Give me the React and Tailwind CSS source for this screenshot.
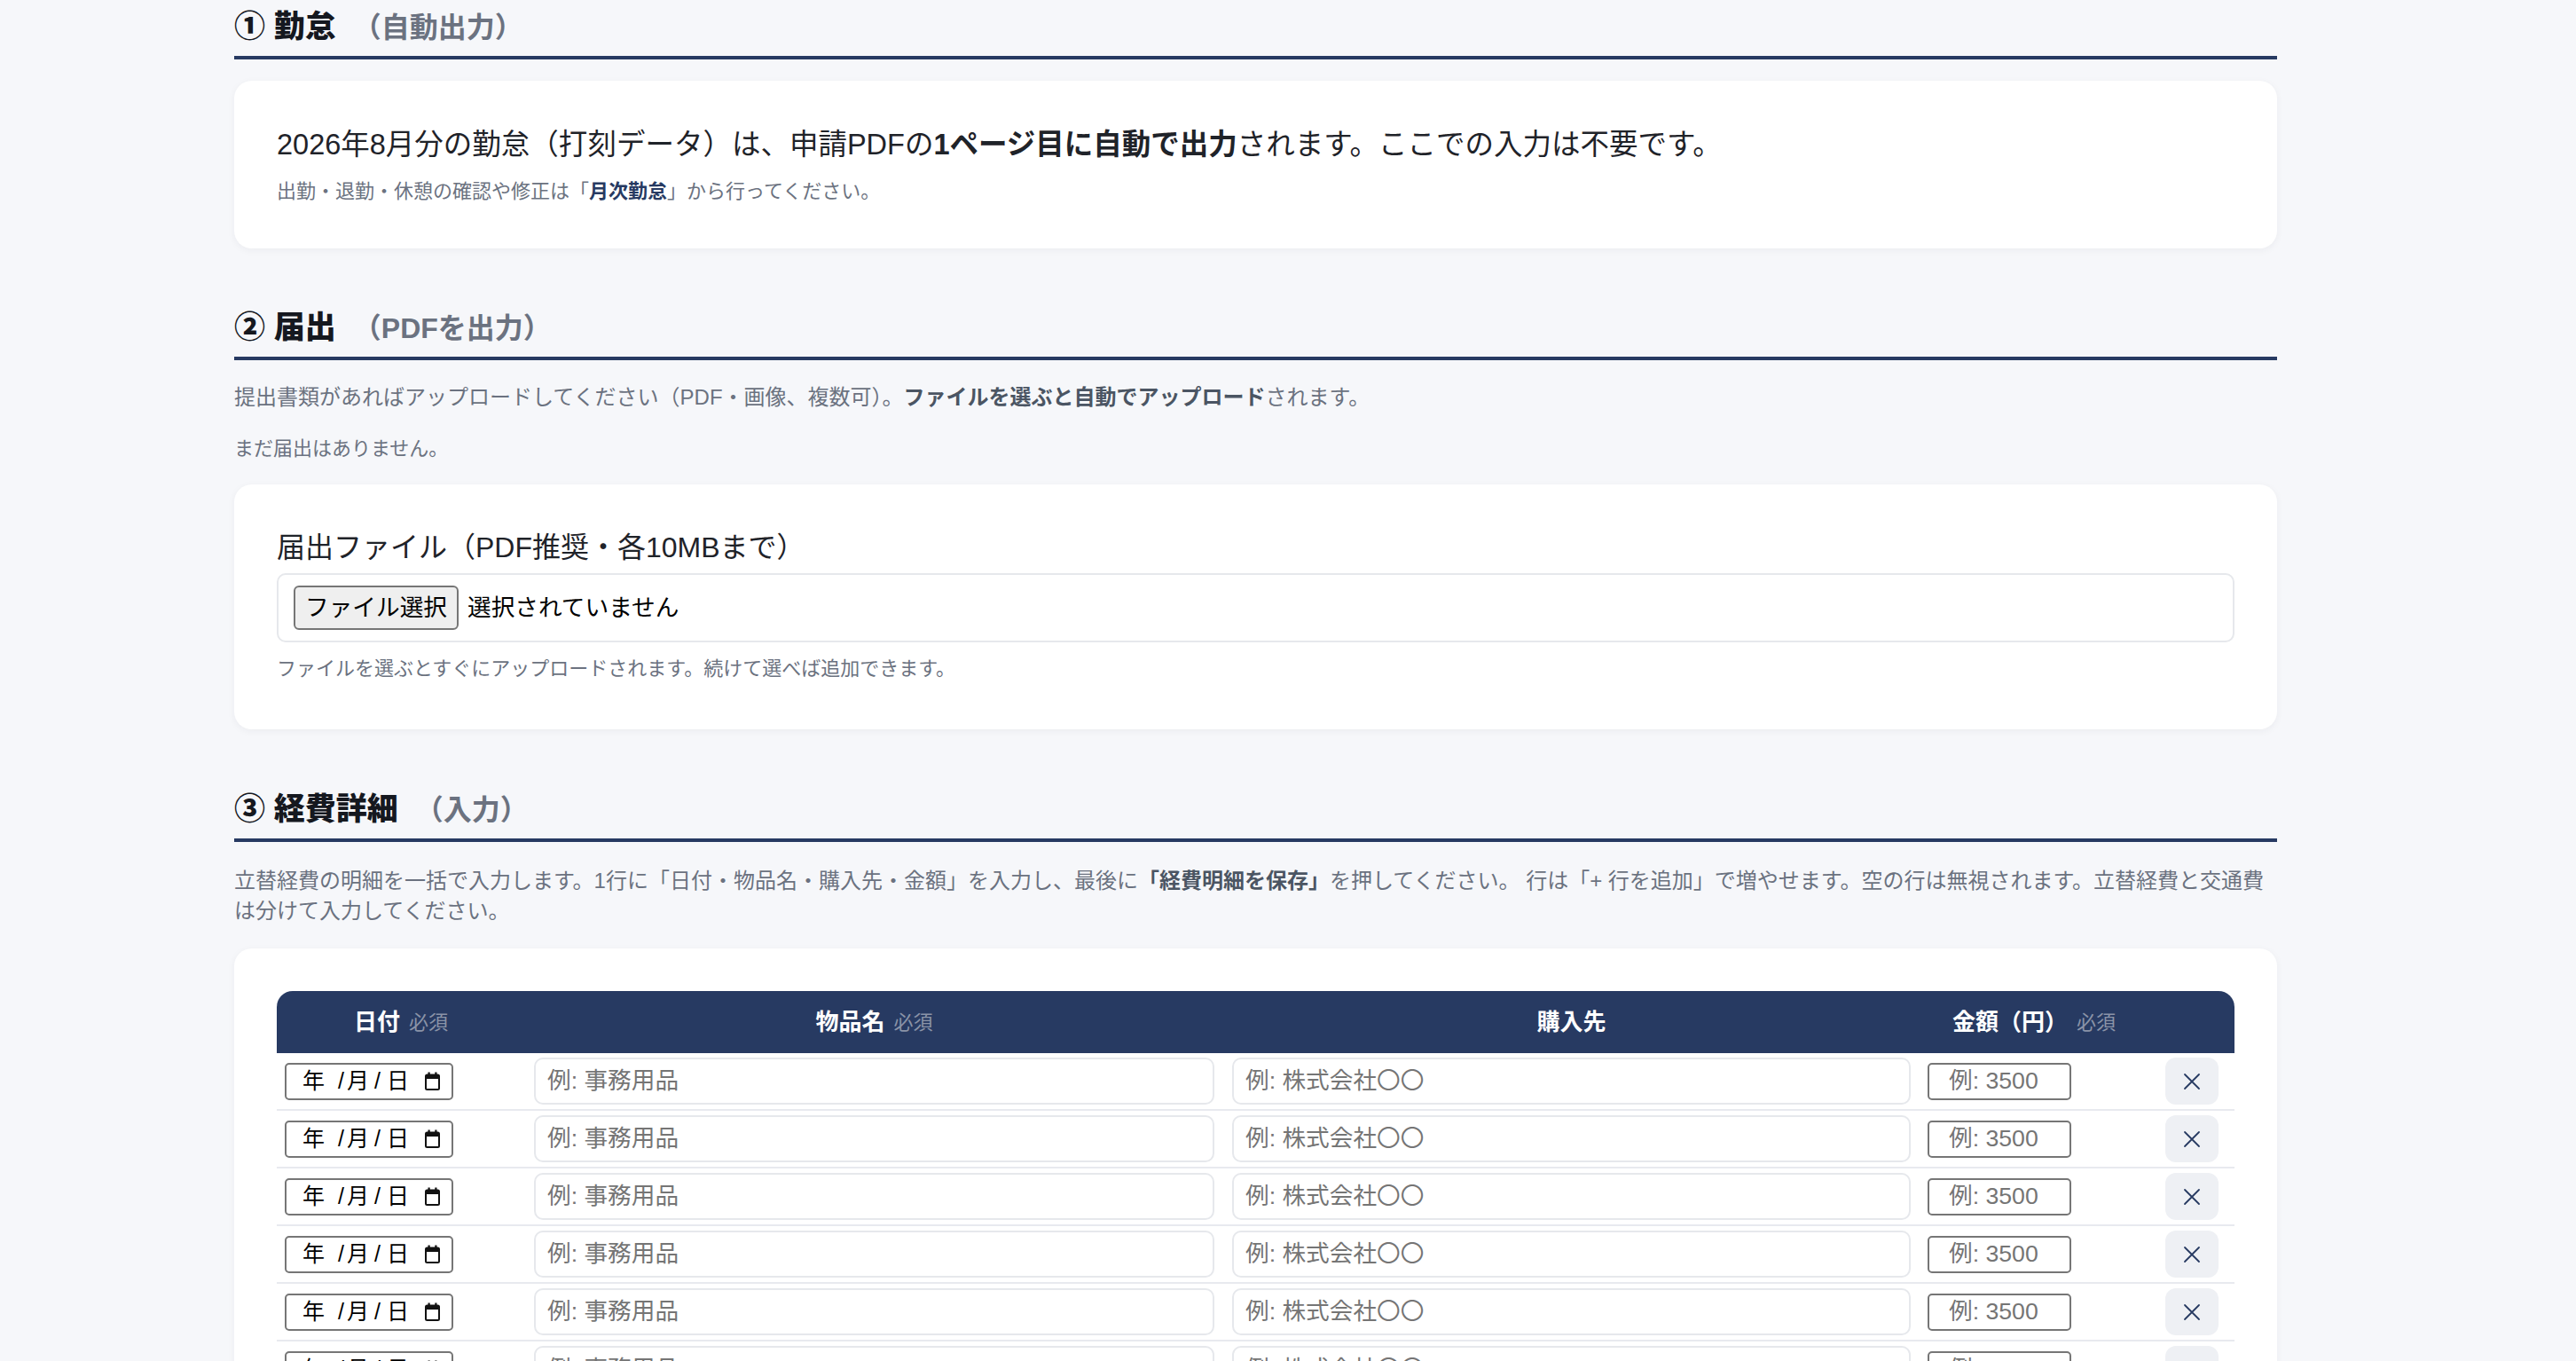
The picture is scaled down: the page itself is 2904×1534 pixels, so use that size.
import { Fragment } from 'react';

const NAVY = '#273a62';

function SectionHeading({ num, title, note }) {
  return (
    <h2 className="flex items-baseline text-[35px] leading-[52px] font-extrabold text-[#15181f] pb-[6px] border-b-4 border-[#273a62]">
      <span>{num} {title}</span>
      <span className="ml-[19px] text-[32px] font-bold text-[#6b7280]">（{note}）</span>
    </h2>
  );
}

function Card({ className = '', children }) {
  return (
    <div className={`bg-white rounded-[20px] shadow-[0_2px_8px_rgba(30,41,59,0.05)] ${className}`}>
      {children}
    </div>
  );
}

function CalendarIcon() {
  return (
    <svg width="17" height="21" viewBox="0 0 17 21" fill="none">
      <rect x="1" y="3.5" width="15" height="16.5" rx="1.5" stroke="#111" strokeWidth="2" />
      <rect x="1" y="3.5" width="15" height="4.5" fill="#111" />
      <rect x="3.5" y="0.5" width="2.2" height="4.5" fill="#111" />
      <rect x="11.3" y="0.5" width="2.2" height="4.5" fill="#111" />
    </svg>
  );
}

function DateField() {
  return (
    <div className="w-[190px] h-[42px] border-2 border-[#767676] rounded-[5px] flex items-center pl-[18px] pr-[13px] text-[25px] text-black">
      <span>年</span>
      <span className="ml-[15px]">/</span>
      <span className="ml-[3px]">月</span>
      <span className="ml-[6px]">/</span>
      <span className="ml-[7px]">日</span>
      <span className="ml-auto flex items-center"><CalendarIcon /></span>
    </div>
  );
}

function Row() {
  return (
    <div className="grid grid-cols-[280px_787px_785px_258px_98px] items-center py-[5px] border-b-2 border-[#e8eaef]">
      <div className="pl-[9px]"><DateField /></div>
      <div className="px-[10px]">
        <input
          placeholder="例: 事務用品"
          className="w-full h-[53px] border-2 border-[#e6e8ec] rounded-[10px] pl-[13px] text-[26.67px] outline-none placeholder:text-[#757575]"
        />
      </div>
      <div className="px-[10px]">
        <input
          placeholder="例: 株式会社〇〇"
          className="w-full h-[53px] border-2 border-[#e6e8ec] rounded-[10px] pl-[13px] text-[26.67px] outline-none placeholder:text-[#757575]"
        />
      </div>
      <div className="pl-[9px]">
        <input
          placeholder="例: 3500"
          className="w-[162px] h-[42px] border-2 border-[#767676] rounded-[5px] pl-[22px] text-[26.67px] outline-none placeholder:text-[#757575]"
        />
      </div>
      <div className="flex justify-center">
        <button className="w-[60px] h-[53px] rounded-[12px] bg-[#eef0f4] flex items-center justify-center">
          <svg width="20" height="20" viewBox="0 0 20 20">
            <path d="M2 2L18 18M18 2L2 18" stroke={NAVY} strokeWidth="1.8" strokeLinecap="round" />
          </svg>
        </button>
      </div>
    </div>
  );
}

function HeadCell({ label, required }) {
  return (
    <div className="flex items-center justify-center gap-[10px]">
      <span className="text-[26px] font-bold text-white">{label}</span>
      {required && <span className="text-[22px] text-[#8a93a7]">必須</span>}
    </div>
  );
}

export default function App() {
  const rows = [0, 1, 2, 3, 4, 5, 6, 7];
  return (
    <div className="h-[1534px] overflow-hidden bg-[#f6f7fa] text-[#1f2329] font-['Liberation_Sans','Noto_Sans_CJK_JP',sans-serif]">
      <div className="ml-[264px] w-[2303px] pt-[4px]">
        <section>
          <SectionHeading num="①" title="勤怠" note="自動出力" />
          <Card className="mt-[24px] p-[48px]">
            <p className="text-[32.5px] leading-[48px]">
              2026年8月分の勤怠（打刻データ）は、申請PDFの<strong className="font-bold">1ページ目に自動で出力</strong>されます。ここでの入力は不要です。
            </p>
            <p className="mt-[12px] text-[22px] leading-[33px] text-[#6b7280]">
              出勤・退勤・休憩の確認や修正は「<span className="text-[#273a62] font-semibold">月次勤怠</span>」から行ってください。
            </p>
          </Card>
        </section>

        <section className="mt-[63px]">
          <SectionHeading num="②" title="届出" note="PDFを出力" />
          <p className="mt-[25px] text-[24px] leading-[34px] text-[#6b7280]">
            提出書類があればアップロードしてください（PDF・画像、複数可）。<strong className="font-bold text-[#4b5563]">ファイルを選ぶと自動でアップロード</strong>されます。
          </p>
          <p className="mt-[24px] text-[22px] leading-[33px] text-[#6b7280]">まだ届出はありません。</p>
          <Card className="mt-[24px] px-[48px] pt-[48px] pb-[52px]">
            <div className="text-[32px] leading-[46px] text-[#1f2329]">届出ファイル（PDF推奨・各10MBまで）</div>
            <div className="mt-[6px] h-[78px] border-2 border-[#e6e8ec] rounded-[10px] flex items-center pl-[17px]">
              <button className="w-[186px] h-[50px] bg-[#efefef] border-2 border-[#767676] rounded-[6px] text-[26.67px] text-black">
                ファイル選択
              </button>
              <span className="ml-[10px] text-[26.67px] text-black">選択されていません</span>
            </div>
            <p className="mt-[13px] text-[22px] leading-[33px] text-[#6b7280]">
              ファイルを選ぶとすぐにアップロードされます。続けて選べば追加できます。
            </p>
          </Card>
        </section>

        <section className="mt-[64px]">
          <SectionHeading num="③" title="経費詳細" note="入力" />
          <p className="mt-[27px] text-[24px] leading-[34px] text-[#6b7280]">
            立替経費の明細を一括で入力します。1行に「日付・物品名・購入先・金額」を入力し、最後に<strong className="font-bold text-[#4b5563]">「経費明細を保存」</strong>を押してください。 行は「+ 行を追加」で増やせます。空の行は無視されます。立替経費と交通費は分けて入力してください。
          </p>
          <Card className="mt-[25px] p-[48px]">
            <div className="grid grid-cols-[280px_787px_785px_258px_98px] h-[70px] bg-[#273a62] rounded-t-[18px]">
              <HeadCell label="日付" required />
              <HeadCell label="物品名" required />
              <HeadCell label="購入先" />
              <HeadCell label="金額（円）" required />
              <div />
            </div>
            {rows.map((r) => (
              <Fragment key={r}>
                <Row />
              </Fragment>
            ))}
          </Card>
        </section>
      </div>
    </div>
  );
}
